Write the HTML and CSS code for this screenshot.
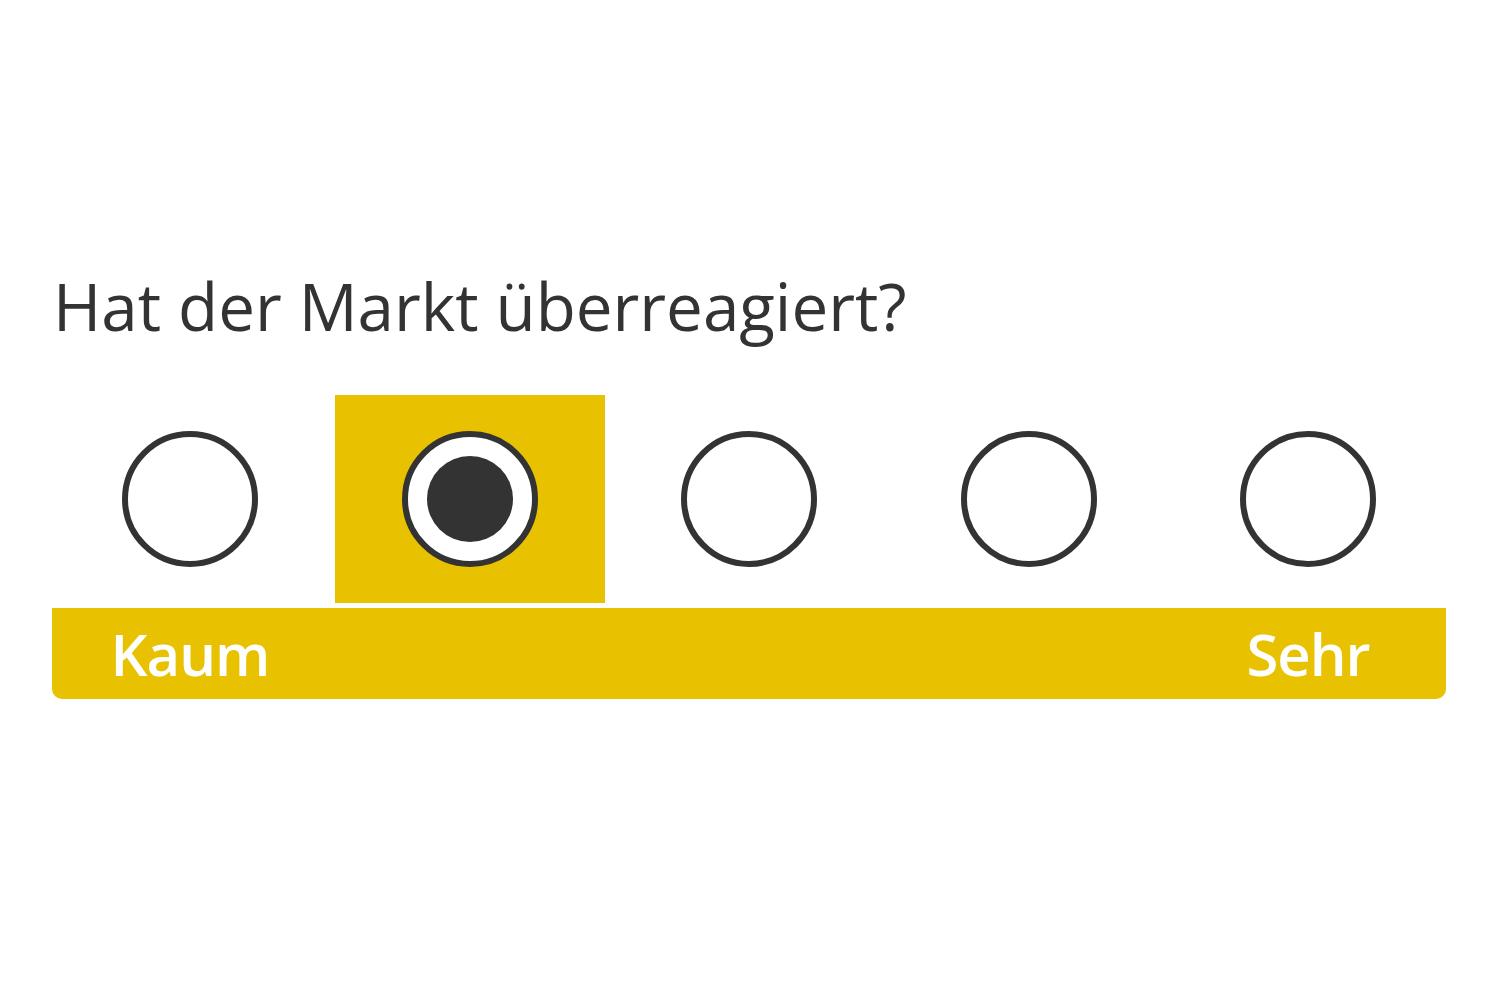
FILE: index.html
```html
<!DOCTYPE html>
<html lang="de">
<head>
<meta charset="utf-8">
<title>Umfrage</title>
<link rel="stylesheet" href="styles.css">
</head>
<body>
<main class="poll">
  <h1 class="question">Hat der Markt überreagiert?</h1>
  <div class="options">
    <div class="cell"><span class="radio"></span></div>
    <div class="cell selected"><span class="radio checked"></span></div>
    <div class="cell"><span class="radio"></span></div>
    <div class="cell"><span class="radio"></span></div>
    <div class="cell"><span class="radio"></span></div>
  </div>
  <div class="scale">
    <span class="label first">Kaum</span>
    <span class="label last">Sehr</span>
  </div>
</main>
</body>
</html>
```
FILE: styles.css
```css
html, body {
  margin: 0;
  padding: 0;
  background: #ffffff;
}

.poll {
  width: 1394px;
  margin-left: 52px;
  padding-top: 266px;
  display: flex;
  flex-direction: column;
}

.question {
  margin: 0 0 49px 1px;
  font-family: "Open Sans", "Noto Sans", sans-serif;
  font-weight: 400;
  font-size: 65.5px;
  line-height: 80px;
  color: #333333;
}

.options {
  display: grid;
  grid-template-columns: repeat(5, 1fr);
  column-gap: 9.5px;
  padding: 0 3px;
  height: 208px;
}

.cell {
  display: flex;
  align-items: center;
  justify-content: center;
}

.cell.selected {
  background: #e8c200;
}

.radio {
  box-sizing: border-box;
  width: 136px;
  height: 136px;
  border: 6px solid #333333;
  border-radius: 50%;
  background: #ffffff;
  display: flex;
  align-items: center;
  justify-content: center;
}

.radio.checked::after {
  content: "";
  width: 86px;
  height: 86px;
  border-radius: 50%;
  background: #333333;
}

.scale {
  margin-top: 5px;
  height: 91px;
  background: #e8c200;
  border-radius: 0 0 10px 10px;
  display: grid;
  grid-template-columns: repeat(5, 1fr);
  column-gap: 9.5px;
  padding: 0 3px;
  align-items: center;
}

.label {
  font-family: "Open Sans", "Noto Sans", sans-serif;
  font-weight: 600;
  font-size: 58px;
  line-height: 1;
  color: #ffffff;
  text-align: center;
  letter-spacing: -1px;
}

.label.first {
  grid-column: 1;
}

.label.last {
  grid-column: 5;
}
```
